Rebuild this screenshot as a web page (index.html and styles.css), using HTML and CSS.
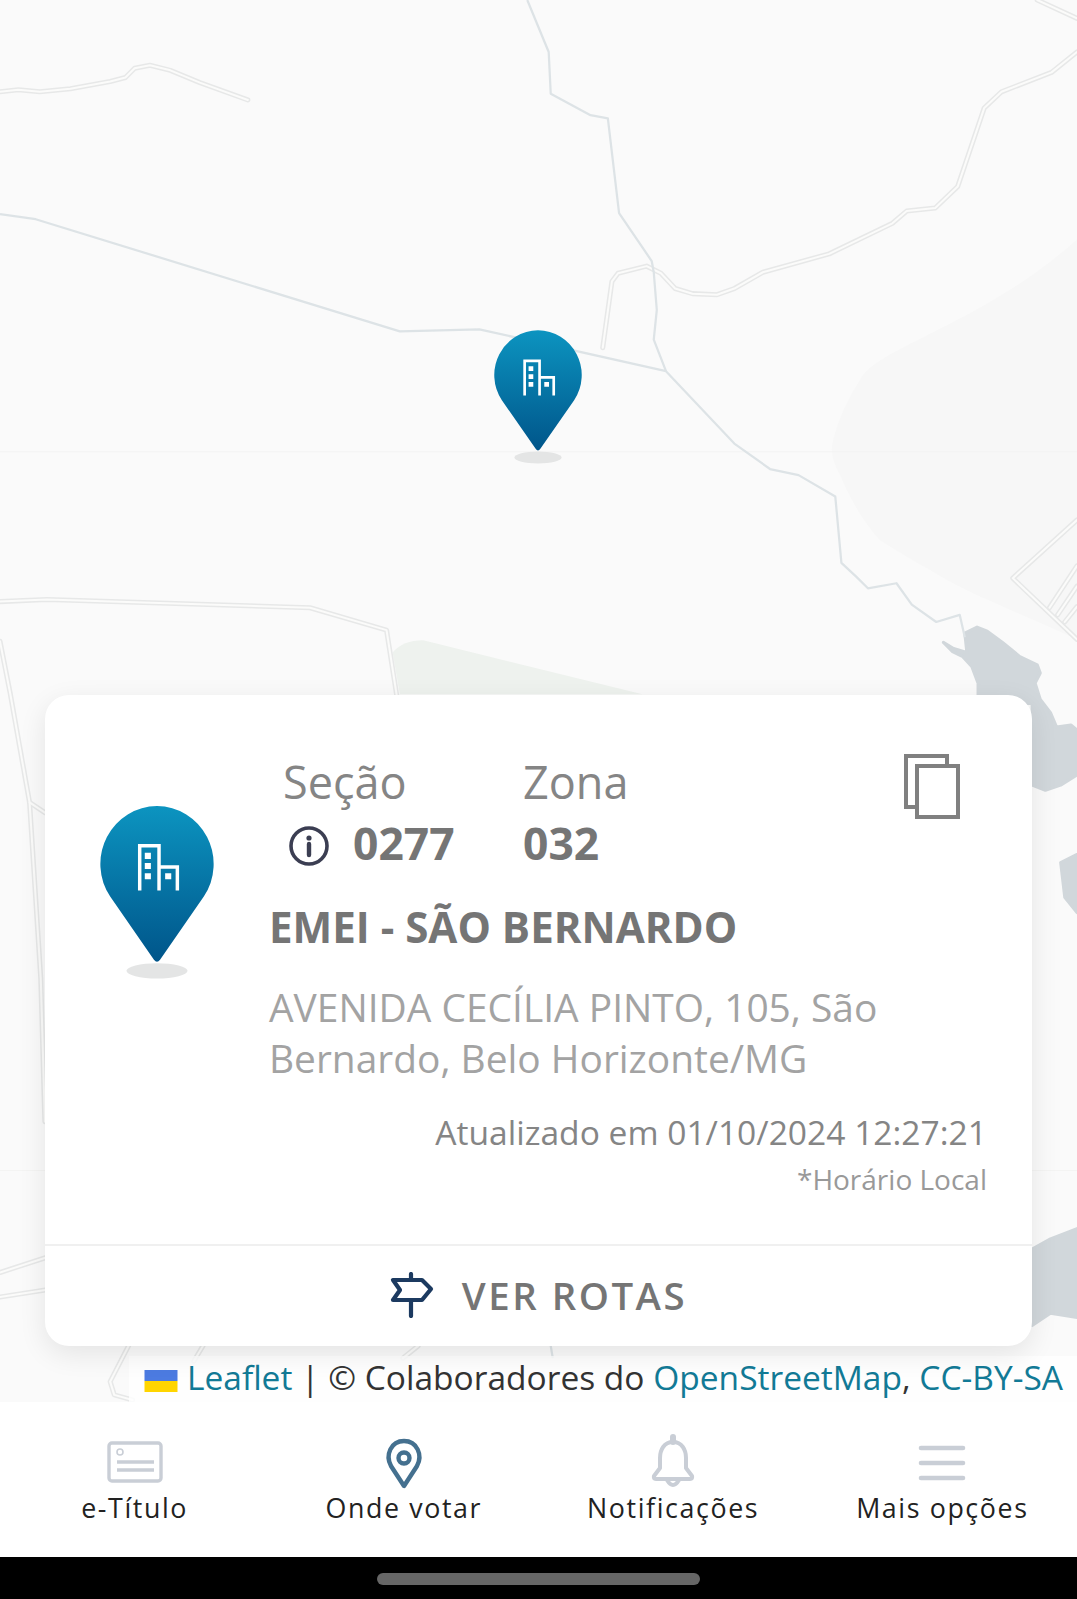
FILE: index.html
```html
<!DOCTYPE html>
<html lang="pt-BR">
<head>
  <meta charset="UTF-8">
  <meta name="viewport" content="width=device-width, initial-scale=1.0">
  <title>Onde votar</title>
  <link rel="stylesheet" href="styles.css">
</head>
<body>
  <svg class="defs" width="0" height="0">
    <defs>
      <linearGradient id="pinFill" x1="0" y1="0" x2="0" y2="1">
        <stop offset="0" stop-color="#0c94c0"/>
        <stop offset="1" stop-color="#00558a"/>
      </linearGradient>
      <symbol id="pin" viewBox="0 0 112 170">
        <ellipse cx="56" cy="162" rx="30" ry="7.5" fill="#e4e5e5"/>
        <path d="M56 0A56 57 0 0 1 102 89L59 151Q56 155 53 151L10 89A56 57 0 0 1 56 0Z" fill="url(#pinFill)"/>
        <path d="M39 83V39H58V83M58 60H76V83" fill="none" stroke="#fff" stroke-width="3.4"/>
        <path d="M44 46h6v6h-6zM44 56h6v6h-6zM44 66h6v6h-6zM64 66h6v6h-6z" fill="#fff"/>
      </symbol>
    </defs>
  </svg>

  <div id="main">
    <div class="map">
      <svg class="tiles" viewBox="0 0 1056 1375" preserveAspectRatio="none">
        <rect width="1056" height="1375" fill="#fafafa"/>
        <path class="land" d="M843 373C860 340 960 320 1056 235V627L961 585C940 575 930 570 912 559C895 550 880 540 863 530C845 510 838 495 830 480C822 460 812 450 817 431Q825 400 843 373Z"/>
        <path class="park" d="M385 640Q395 628 415 628L630 681H392Z"/>
        <path class="water" d="M925 630L934 639L944 644L953 654L959 670L959 690H1012V770L1025 775L1040 770L1056 760V716L1050 711L1036 713L1030 699L1020 686L1015 670L1020 660L1017 652L1000 644L983 630L968 619L958 615L946 621L948 640L935 636Z"/>
        <path class="water" d="M1056 838L1040 846L1044 880L1056 895Z"/>
        <path class="water" d="M1012 1225L1030 1215L1056 1205V1292L1030 1288L1012 1300Z"/>
        <path class="seam" d="M0 443H1056M0 1148H1056"/>

        <g id="roads">
          <path d="M0 90L18 88L39 90L69 87L108 80L123 76L132 67L147 64L167 69L196 81L243 98"/>
          <path d="M591 341L600 276L606 268L634 261L648 268L662 283L679 288L703 289L720 283L748 267L813 249L875 219L889 207L917 204L939 183L965 106L982 90L1031 71L1056 51"/>
          <path d="M1017 0L1056 18"/>
          <path d="M0 590L46 588L304 596L379 618L389 682"/>
          <path d="M0 629L10 680L29 787L40 960L44 1100"/>
          <path d="M29 787L44 797"/>
          <path d="M1056 510L993 567L1056 627M1029 596L1056 555M1037 603L1056 575M1044 610L1056 595"/>
          <path d="M0 1248L46 1233M0 1272L46 1265"/>
          <path d="M126 1320L108 1355L112 1368L130 1373"/>
          <path d="M199 1320L190 1335"/>
          <path d="M410 1320L395 1332"/>
        </g>
        <use href="#roads" class="road-casing"/>
        <use href="#roads" class="road-inner"/>

        <g class="path">
          <path d="M517 0L538 51L540 92L579 113L596 116L607 209L639 256L641 267L644 304L641 333L653 364"/>
          <path d="M0 210L35 215L392 325L470 323L653 364L720 435L755 460L783 466L819 487L825 552L840 566L851 577L879 572L894 593L918 610L941 603L946 625"/>
          <path d="M540 1320L542 1332"/>
        </g>
      </svg>

      <svg class="map-pin"><use href="#pin"/></svg>

      <div class="attribution">
        <svg class="flag" viewBox="0 0 12 8"><rect width="12" height="4" fill="#4c7be1"/><rect y="4" width="12" height="4" fill="#ffd500"/></svg>
        <a>Leaflet</a> <span class="sep">|</span> © Colaboradores do <a>OpenStreetMap</a>, <a>CC-BY-SA</a>
      </div>

      <div class="card">
        <div class="card-body">
          <svg class="card-pin"><use href="#pin"/></svg>
          <div class="card-info">
            <div class="numbers">
              <div class="num-col section-col">
                <div class="num-label">Seção</div>
                <div class="num-value">
                  <svg class="info-icon" viewBox="0 0 40 40">
                    <circle cx="20" cy="20" r="18" fill="none" stroke="#3b3e52" stroke-width="3.6"/>
                    <circle cx="20" cy="12" r="2.6" fill="#3b3e52"/>
                    <path d="M20 18V29" stroke="#3b3e52" stroke-width="4.4" stroke-linecap="round"/>
                  </svg>
                  0277
                </div>
              </div>
              <div class="num-col">
                <div class="num-label">Zona</div>
                <div class="num-value">032</div>
              </div>
              <svg class="copy-icon" viewBox="0 0 57 65" fill="none" stroke="#808080" stroke-width="4">
                <path d="M14 53H3V2H44V12"/>
                <rect x="14" y="12" width="41" height="51"/>
              </svg>
            </div>
            <h1 class="place">EMEI - SÃO BERNARDO</h1>
            <p class="address">AVENIDA CECÍLIA PINTO, 105, São Bernardo, Belo Horizonte/MG</p>
            <p class="updated">Atualizado em 01/10/2024 12:27:21</p>
            <p class="local">*Horário Local</p>
          </div>
        </div>
        <div class="card-action">
          <svg class="route-icon" viewBox="0 0 44 46" fill="none" stroke="#1c3a60" stroke-width="4.2" stroke-linecap="round" stroke-linejoin="round">
            <path d="M21 2V8M21 28V44"/>
            <path d="M3 8H32L41 17L32 28H3L10 18Z"/>
          </svg>
          <span>VER ROTAS</span>
        </div>
      </div>
    </div>

    <nav class="tabs">
      <div class="tab">
        <svg class="tab-icon" viewBox="0 0 56 50" fill="none" stroke="#c9ced6">
          <rect x="2" y="6" width="52" height="38" rx="3" stroke-width="3.4"/>
          <circle cx="13" cy="15" r="3" stroke-width="1.6"/>
          <path d="M10 25H47M10 33H47" stroke-width="3.4"/>
        </svg>
        <span>e-Título</span>
      </div>
      <div class="tab">
        <svg class="tab-icon" viewBox="0 0 56 50" fill="none" stroke="#44708f" stroke-width="4.4">
          <path d="M28 49L15 29C9 18 15 4 28 4C41 4 47 18 41 29Z" stroke-linejoin="round"/>
          <circle cx="28" cy="21" r="5.5"/>
        </svg>
        <span>Onde votar</span>
      </div>
      <div class="tab">
        <svg class="tab-icon" viewBox="0 0 56 50" fill="none" stroke="#c9ced6" stroke-width="4" stroke-linejoin="round">
          <path d="M28 5C19 5 15 13 15 21V31L9 39Q8 42 11 42H45Q48 42 47 39L41 31V21C41 13 37 5 28 5Z"/>
          <path d="M28 0V5" stroke-width="6" stroke-linecap="round"/>
          <path d="M22 43Q28 53 34 43"/>
        </svg>
        <span>Notificações</span>
      </div>
      <div class="tab">
        <svg class="tab-icon" viewBox="0 0 56 50" fill="none" stroke="#c9ced6" stroke-width="4.6" stroke-linecap="round">
          <path d="M7 11H49M7 26H49M7 41H49"/>
        </svg>
        <span>Mais opções</span>
      </div>
    </nav>

    <div class="sysbar"><div class="handle"></div></div>
  </div>
</body>
</html>
```

FILE: styles.css
```css
body {
  margin: 0;
  background: #000;
  font-family: "Open Sans", "Noto Sans", sans-serif;
}
p, h1 {
  margin: 0;
}
.defs {
  position: absolute;
}
#main {
  width: 1077px;
  height: 1599px;
  display: flex;
  flex-direction: column;
  overflow: hidden;
}

/* map */
.map {
  position: relative;
  height: 1402px;
  flex: none;
  overflow: hidden;
}
.tiles {
  position: absolute;
  top: 0;
  left: 0;
  width: 100%;
  height: 100%;
}
.land {
  fill: #f7f7f7;
}
.park {
  fill: #eef2ee;
}
.water {
  fill: #d1d7db;
  stroke: #d1d7db;
  stroke-width: 3;
  stroke-linejoin: round;
}
.seam {
  fill: none;
  stroke: #f4f4f3;
  stroke-width: 1;
}
#roads {
  fill: none;
  stroke-linejoin: round;
  stroke-linecap: round;
}
.road-casing {
  stroke: #e7e8e8;
  stroke-width: 5;
}
.road-inner {
  stroke: #fbfbfa;
  stroke-width: 2;
}
.path path {
  fill: none;
  stroke: #dde3e6;
  stroke-width: 2.2;
  stroke-linejoin: round;
}
.map-pin {
  position: absolute;
  left: 494px;
  top: 330px;
  width: 88px;
  height: 134px;
}
.attribution {
  position: absolute;
  right: 0;
  bottom: 0;
  height: 46px;
  padding: 0 14px 0 15px;
  line-height: 42px;
  font-size: 33.5px;
  color: #333;
  background: rgba(255, 255, 255, .8);
  white-space: nowrap;
}
.attribution a {
  color: #127a96;
}
.flag {
  width: 34px;
  height: 22px;
  vertical-align: -2px;
}

/* info card */
.card {
  position: absolute;
  left: 45px;
  top: 695px;
  width: 987px;
  height: 651px;
  display: flex;
  flex-direction: column;
  box-sizing: border-box;
  background: #fff;
  border-radius: 24px;
  box-shadow: 0 8px 28px rgba(0, 0, 0, .09);
}
.card-body {
  flex: 1;
  display: flex;
  padding: 57px 45px 0 55px;
}
.card-pin {
  flex: none;
  width: 114px;
  height: 173px;
  margin: 54px 55px 0 0;
}
.card-info {
  flex: 1;
  min-width: 0;
}
.numbers {
  display: flex;
  padding-left: 14px;
  color: #757575;
}
.section-col {
  width: 240px;
}
.num-label {
  font-size: 45px;
  line-height: 60px;
  color: #858585;
}
.num-value {
  display: flex;
  align-items: center;
  margin-top: 1px;
  gap: 24px;
  font-size: 44.4px;
  font-weight: 700;
  line-height: 60px;
}
.info-icon {
  width: 40px;
  height: 40px;
  margin: 6px 0 0 6px;
}
.copy-icon {
  width: 57px;
  height: 65px;
  margin: 2px 27px 0 auto;
}
.place {
  margin-top: 26px;
  font-size: 42.1px;
  font-weight: 700;
  line-height: 56px;
  color: #757575;
}
.address {
  margin-top: 26px;
  font-size: 38.9px;
  line-height: 51px;
  color: #a3a3a3;
}
.updated {
  margin-top: 27px;
  font-size: 33.6px;
  line-height: 44px;
  color: #858585;
  text-align: right;
}
.local {
  margin-top: 5px;
  font-size: 28px;
  line-height: 40px;
  color: #999;
  text-align: right;
}
.card-action {
  height: 97px;
  padding-bottom: 3px;
  flex: none;
  display: flex;
  align-items: center;
  justify-content: center;
  gap: 28px;
  border-top: 2px solid #f0f0f0;
  font-size: 38.4px;
  font-weight: 600;
  letter-spacing: 2.5px;
  color: #757575;
}
.route-icon {
  width: 44px;
  height: 46px;
}

/* bottom tabs */
.tabs {
  height: 155px;
  flex: none;
  display: grid;
  grid-template-columns: repeat(4, 1fr);
  background: #fff;
}
.tab {
  display: flex;
  flex-direction: column;
  align-items: center;
  padding-top: 35px;
  font-size: 26.8px;
  line-height: 36px;
  letter-spacing: 1.6px;
  color: #222;
}
.tab-icon {
  width: 56px;
  height: 50px;
  margin-bottom: 3px;
  overflow: visible;
}

/* android bar */
.sysbar {
  flex: 1;
  background: #000;
  padding-top: 16px;
}
.handle {
  width: 323px;
  height: 12px;
  margin: 0 auto;
  border-radius: 6px;
  background: #666;
}
```
